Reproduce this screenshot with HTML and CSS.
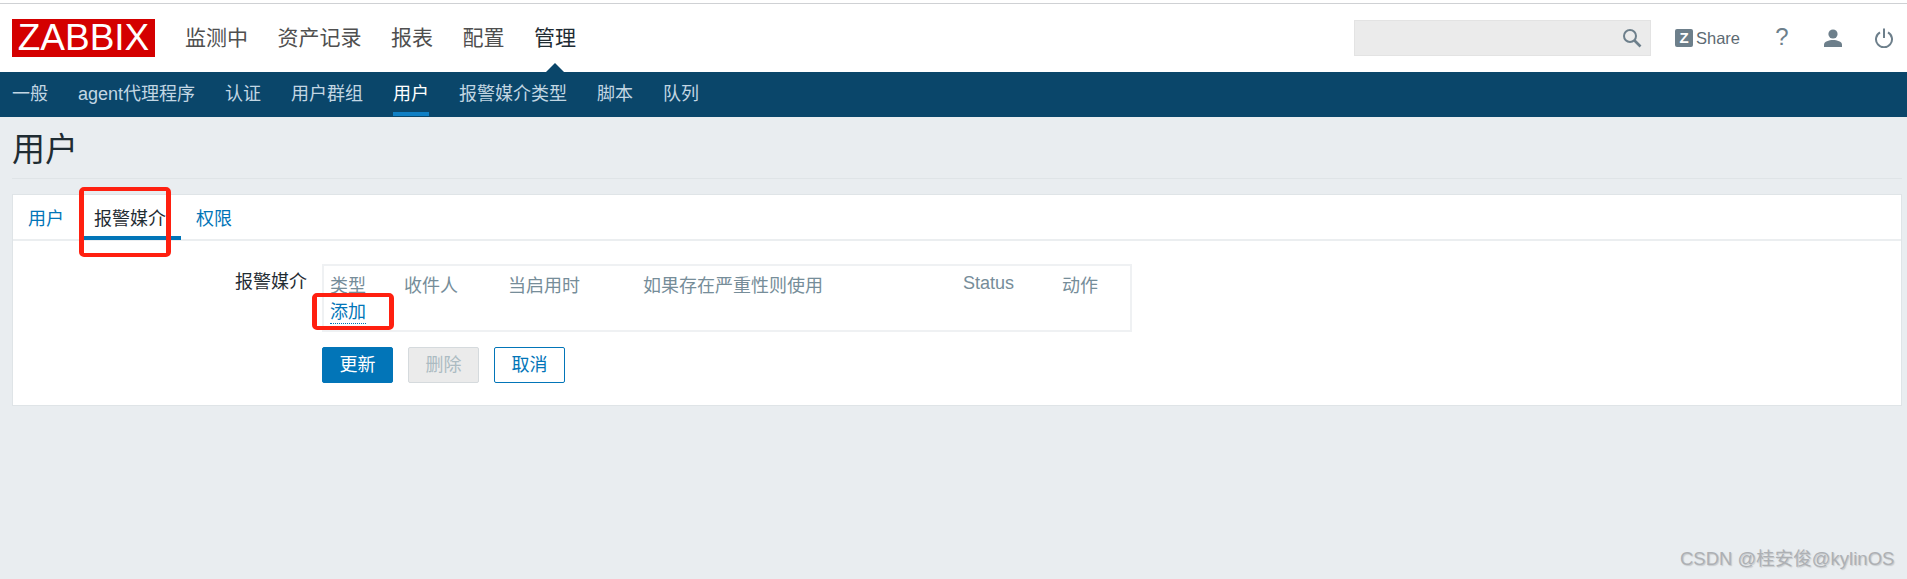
FILE: index.html
```html
<!DOCTYPE html>
<html lang="zh">
<head>
<meta charset="utf-8">
<title>用户</title>
<link rel="stylesheet" href="styles.css">
</head>
<body>
<div class="topline"></div>
<header class="topbar">
  <a class="logo">ZABBIX</a>
  <nav class="mainnav">
    <a>监测中</a><a>资产记录</a><a>报表</a><a>配置</a><a class="active">管理</a>
  </nav>
  <div class="tools">
    <div class="search">
      <svg class="search-icon" width="20" height="20" viewBox="0 0 20 20"><circle cx="8" cy="8" r="6" fill="none" stroke="#6d7f8b" stroke-width="2"/><path d="M12.5 12.5 L18.5 18.5" stroke="#6d7f8b" stroke-width="2.6"/></svg>
    </div>
    <a class="share"><span class="zbadge">Z</span>Share</a>
    <a class="help">?</a>
    <svg class="user-icon" width="20" height="18" viewBox="0 0 20 18"><circle cx="10" cy="5" r="4.6" fill="#6d7f8b"/><path d="M1 18 V15.5 C1 12.5 6 11 10 11 C14 11 19 12.5 19 15.5 V18 Z" fill="#6d7f8b"/></svg>
    <svg class="power-icon" width="20" height="20" viewBox="0 0 20 20"><path d="M6 4.4 A8 8 0 1 0 14 4.4" fill="none" stroke="#6d7f8b" stroke-width="2"/><path d="M10 0.5 V10" stroke="#6d7f8b" stroke-width="2"/></svg>
  </div>
</header>
<nav class="subnav">
  <a>一般</a><a>agent代理程序</a><a>认证</a><a>用户群组</a><a class="active">用户</a><a>报警媒介类型</a><a>脚本</a><a>队列</a>
</nav>
<main class="page">
  <h1 class="title">用户</h1>
  <section class="card">
    <div class="tabs">
      <a class="tab">用户</a><a class="tab current">报警媒介</a><a class="tab">权限</a>
    </div>
    <div class="form">
      <div class="form-row">
        <div class="label">报警媒介</div>
        <div class="field">
          <table class="media">
            <thead>
              <tr><th class="c1">类型</th><th class="c2">收件人</th><th class="c3">当启用时</th><th class="c4">如果存在严重性则使用</th><th class="c5">Status</th><th>动作</th></tr>
            </thead>
            <tbody>
              <tr><td colspan="6"><a class="add">添加</a></td></tr>
            </tbody>
          </table>
          <div class="buttons">
            <button class="btn primary">更新</button>
            <button class="btn disabled">删除</button>
            <button class="btn outline">取消</button>
          </div>
        </div>
      </div>
    </div>
  </section>
</main>
<div class="mark mark-tab"></div>
<div class="mark mark-add"></div>
<div class="watermark">CSDN @桂安俊@kylinOS</div>
</body>
</html>
```
FILE: styles.css
```css
* { box-sizing: border-box; }
html, body { margin: 0; padding: 0; }
body {
  height: 579px;
  overflow: hidden;
  background: #e9edf0;
  color: #1f2c33;
  font-family: "Liberation Sans", "Noto Sans CJK SC", sans-serif;
  font-size: 18px;
  position: relative;
}
.topline { height: 4px; background: #fff; border-bottom: 1px solid #cfd1d4; }
.topbar {
  height: 68px;
  background: #fff;
  display: flex;
  align-items: center;
  padding-left: 12px;
}
.logo {
  width: 143px;
  height: 38px;
  background: #d40000;
  color: #fff;
  font-size: 37px;
  line-height: 38px;
  text-align: center;
  letter-spacing: 0;
}
.mainnav { display: flex; gap: 29.5px; margin-left: 30px; font-size: 21px; color: #4f4f4f; }
.mainnav a { position: relative; line-height: 30px; }
.mainnav a.active { color: #1f2c33; }
.mainnav a.active::after {
  content: "";
  position: absolute;
  left: 50%;
  margin-left: -12px;
  top: 40px;
  border-left: 12px solid transparent;
  border-right: 12px solid transparent;
  border-bottom: 12px solid #0a466a;
}
.tools { margin-left: auto; display: flex; align-items: center; }
.search {
  width: 297px;
  height: 36px;
  background: #ebebeb;
  border: 1px solid #e3e3e3;
  display: flex;
  align-items: center;
  justify-content: flex-end;
  padding-right: 8px;
}
.share {
  margin-left: 24px;
  display: flex;
  align-items: center;
  gap: 3px;
  color: #5d6a73;
  font-size: 16.5px;
  width: 67px;
}
.zbadge {
  width: 18px;
  height: 18px;
  background: #6d7f8b;
  color: #fff;
  font-size: 15px;
  font-weight: bold;
  line-height: 18px;
  text-align: center;
  border-radius: 2px;
}
.help { margin-left: 33px; color: #6d7f8b; font-size: 24px; line-height: 26px; width: 14px; text-align: center; margin-bottom: 2px; }
.user-icon { margin-left: 34px; }
.power-icon { margin-left: 31px; margin-right: 13px; }
.subnav {
  height: 45px;
  background: #0a466a;
  display: flex;
  gap: 30px;
  padding-left: 12px;
  font-size: 18px;
  color: #c2d6e3;
}
.subnav a { position: relative; line-height: 44px; height: 45px; }
.subnav a.active { color: #fff; border-bottom: 4px solid #0f7fc4; height: 44px; }
.page { padding: 0 5px 0 12px; }
.title {
  margin: 0;
  height: 62px;
  font-size: 33px;
  font-weight: normal;
  line-height: 66px;
  border-bottom: 1px solid #dfe4e7;
}
.card {
  margin-top: 15px;
  height: 212px;
  background: #fff;
  border: 1px solid #dfe4e7;
}
.tabs {
  height: 46px;
  display: flex;
  padding-left: 15px;
  gap: 0;
  border-bottom: 2px solid #ebeef0;
}
.tab {
  color: #0275b8;
  line-height: 48px;
  height: 44px;
  padding: 0;
  margin-right: 30px;
  position: relative;
}
.tab.current { color: #1f2c33; }
.tab.current::after {
  content: "";
  position: absolute;
  left: -12px;
  right: -15px;
  bottom: -1px;
  height: 4px;
  background: #0275b8;
}
.form-row { display: grid; grid-template-columns: 294px 1fr; column-gap: 15px; padding-top: 23px; }
.label { text-align: right; line-height: 30px; margin-top: 3px; font-size: 18px; }
.media {
  width: 810px;
  height: 68px;
  border: 2px solid #eff1f3;
  border-collapse: separate;
  border-spacing: 0;
  table-layout: fixed;
}
.media th, .media td { padding: 0; text-align: left; font-weight: normal; }
.media th { color: #768d99; height: 35px; vertical-align: middle; padding-top: 0; }
.media thead th:first-child, .media td:first-child { padding-left: 6px; }
.c1 { width: 80px; }
.c2 { width: 104px; }
.c3 { width: 135px; }
.c4 { width: 320px; }
.c5 { width: 99px; }
.media td { vertical-align: top; }
.add {
  display: inline-block;
  color: #0275b8;
  line-height: 22px;
  border-bottom: 1px dotted #0275b8;
  margin-top: 0;
}
.buttons { display: flex; gap: 15px; margin-top: 15px; }
.btn {
  width: 71px;
  height: 36px;
  font: inherit;
  font-size: 18px;
  border-radius: 2px;
  padding: 0;
  line-height: 34px;
}
.primary { background: #0275b8; border: 1px solid #0275b8; color: #fff; }
.disabled { background: #ebebeb; border: 1px solid #d5dadd; color: #acbbc2; }
.outline { background: #fff; border: 1px solid #0275b8; color: #0275b8; }
.mark { position: absolute; border-style: solid; border-color: #ff2010; border-width: 4px 5px; border-radius: 5px; }
.mark-tab { left: 79px; top: 187px; width: 92px; height: 70px; }
.mark-add { left: 312px; top: 293px; width: 82px; height: 37px; }
.watermark {
  position: absolute;
  left: 1680px;
  top: 547px;
  font-size: 18.5px;
  line-height: 24px;
  color: #adb0b4;
  text-shadow: 1px 1px 1px rgba(120,120,120,.3);
  white-space: nowrap;
}
```
